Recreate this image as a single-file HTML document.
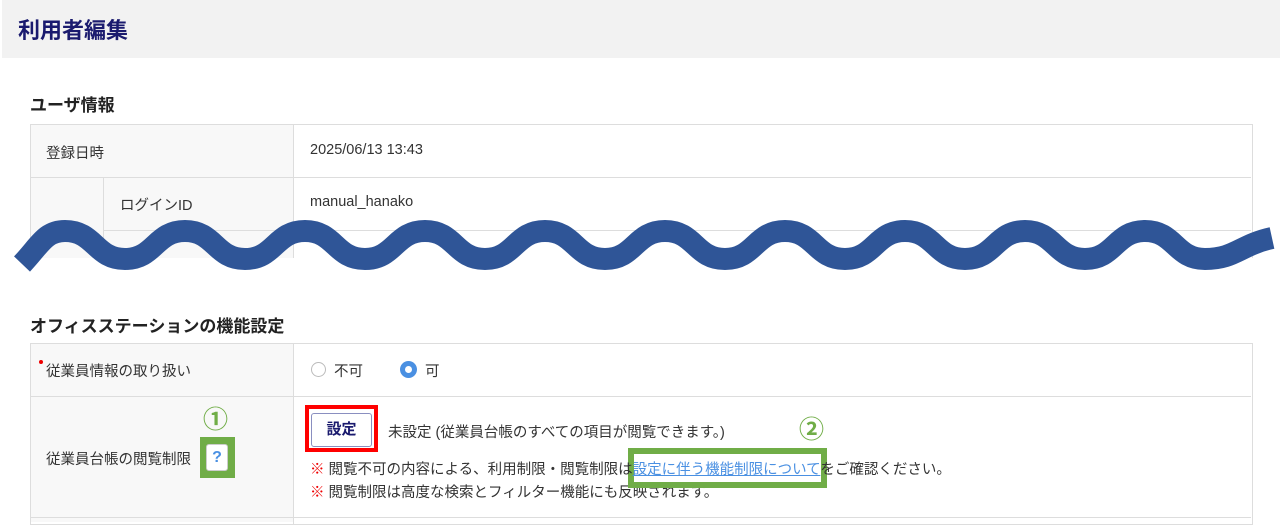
<!DOCTYPE html>
<html><head><meta charset="utf-8"><style>
body{margin:0;width:1280px;height:521px;background:#fff;font-family:"Liberation Sans","Noto Sans CJK JP",sans-serif;color:#333;position:relative;overflow:hidden}
.a{position:absolute}
.hdr{left:2px;top:0;width:1278px;height:58px;background:#f2f2f2}
.t{font-size:14.5px;color:#333;white-space:nowrap}
.line{background:#ddd}
</style></head><body>
<div class="a hdr"></div>
<div class="a" style="left:18px;top:13px;font-size:22px;font-weight:bold;color:#1a1a6e">利用者編集</div>
<div class="a" style="left:30px;top:91px;font-size:17px;font-weight:bold;color:#222">ユーザ情報</div>
<div class="a" style="left:30px;top:124px;width:1221px;height:160px;border:1px solid #ddd;border-bottom:none"></div>
<div class="a" style="left:31px;top:125px;width:262px;height:160px;background:#f8f8f8"></div>
<div class="a line" style="left:293px;top:125px;width:1px;height:160px"></div>
<div class="a line" style="left:30px;top:177px;width:1221px;height:1px"></div>
<div class="a line" style="left:103px;top:178px;width:1px;height:110px"></div>
<div class="a line" style="left:103px;top:230px;width:1148px;height:1px"></div>
<div class="a t" style="left:46px;top:142px">登録日時</div>
<div class="a t" style="left:310px;top:142px">2025/06/13 13:43</div>
<div class="a t" style="left:120px;top:194px">ログインID</div>
<div class="a t" style="left:310px;top:194px">manual_hanako</div>
<div class="a t" style="left:46px;top:220px">オ</div>
<div class="a" style="left:0;top:258px;width:1280px;height:34px;background:#fff"></div>
<svg class="a" style="left:0;top:0" width="1280" height="300">
<path d="M22 264 C 40 245, 45 231, 65 231 C 95 231, 95 259, 125 259 C 155 259, 155 231, 185 231 C 215 231, 215 259, 245 259 C 275 259, 275 231, 305 231 C 335 231, 335 259, 365 259 C 395 259, 395 231, 425 231 C 455 231, 455 259, 485 259 C 515 259, 515 231, 545 231 C 575 231, 575 259, 605 259 C 635 259, 635 231, 665 231 C 695 231, 695 259, 725 259 C 755 259, 755 231, 785 231 C 815 231, 815 259, 845 259 C 875 259, 875 231, 905 231 C 935 231, 935 259, 965 259 C 995 259, 995 231, 1025 231 C 1055 231, 1055 259, 1085 259 C 1115 259, 1115 231, 1145 231 C 1175 231, 1175 259, 1205 259 C 1235 259, 1240 245, 1272 238" fill="none" stroke="#2f5597" stroke-width="22"/>
</svg>
<div class="a" style="left:30px;top:312px;font-size:17px;font-weight:bold;color:#222">オフィスステーションの機能設定</div>
<div class="a" style="left:30px;top:343px;width:1221px;height:180px;border:1px solid #ddd"></div>
<div class="a" style="left:31px;top:344px;width:262px;height:178px;background:#f8f8f8"></div>
<div class="a line" style="left:293px;top:344px;width:1px;height:180px"></div>
<div class="a line" style="left:30px;top:396px;width:1221px;height:1px"></div>
<div class="a line" style="left:30px;top:517px;width:1221px;height:1px"></div>
<div class="a" style="left:39px;top:360px;width:4px;height:4px;border-radius:50%;background:#e00"></div>
<div class="a t" style="left:46px;top:360px">従業員情報の取り扱い</div>
<div class="a" style="left:311px;top:362px;width:15px;height:15px;border:1px solid #bbb;border-radius:50%;box-sizing:border-box"></div>
<div class="a t" style="left:334px;top:360px">不可</div>
<div class="a" style="left:400px;top:361px;width:17px;height:17px;border-radius:50%;background:#4a90e2"></div>
<div class="a" style="left:405px;top:366px;width:7px;height:7px;border-radius:50%;background:#fff"></div>
<div class="a t" style="left:425px;top:360px">可</div>
<div class="a t" style="left:46px;top:448px">従業員台帳の閲覧制限</div>
<div class="a" style="left:200px;top:437px;width:35px;height:41px;background:#70ad47"></div>
<div class="a" style="left:206px;top:444px;width:22px;height:27px;background:#fff;border:1px solid #ccc;border-radius:3px;box-sizing:border-box;color:#4a90e2;font-size:16px;font-weight:bold;text-align:center;line-height:25px">?</div>
<div class="a" style="left:203px;top:400px;font-size:25px;color:#70ad47;font-weight:bold">①</div>
<div class="a" style="left:305px;top:405px;width:73px;height:47px;background:#f00"></div>
<div class="a" style="left:309px;top:409px;width:65px;height:39px;background:#fff"></div>
<div class="a" style="left:311px;top:413px;width:61px;height:34px;border:1px solid #8a8fc0;border-radius:3px;box-sizing:border-box;text-align:center;line-height:32px;font-size:15px;font-weight:bold;color:#1a1a6e">設定</div>
<div class="a t" style="left:388px;top:421px">未設定 (従業員台帳のすべての項目が閲覧できます。)</div>
<div class="a" style="left:628px;top:448px;width:199px;height:40px;background:#70ad47"></div>
<div class="a" style="left:634px;top:454px;width:187px;height:28px;background:#fff"></div>
<div class="a" style="left:799px;top:410px;font-size:25px;color:#70ad47;font-weight:bold">②</div>
<div class="a t" style="left:310px;top:458px"><span style="color:#e00">※</span> 閲覧不可の内容による、利用制限・閲覧制限は<span style="color:#4a90e2;text-decoration:underline">設定に伴う機能制限について</span>をご確認ください。</div>
<div class="a t" style="left:310px;top:481px"><span style="color:#e00">※</span> 閲覧制限は高度な検索とフィルター機能にも反映されます。</div>
<div class="a" style="left:628px;top:482px;width:199px;height:6px;background:#70ad47"></div>
</body></html>
